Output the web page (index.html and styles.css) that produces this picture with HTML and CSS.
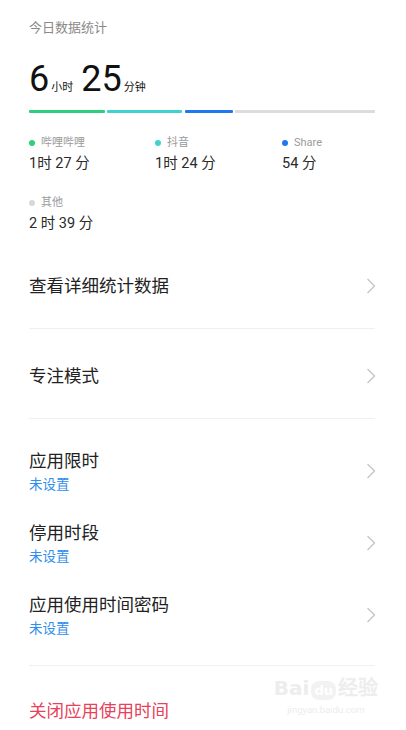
FILE: index.html
```html
<!DOCTYPE html>
<html lang="zh-CN">
<head>
    <meta charset="UTF-8">
    <meta name="viewport" content="width=device-width, initial-scale=1.0">
    <title>屏幕使用时间</title>
    <link rel="stylesheet" href="styles.css">
</head>
<body>
    <div class="page">
        <div class="stats-title">今日数据统计</div>

        <div class="total">
            <span class="num">6</span><span class="unit">小时</span><span class="num">25</span><span class="unit">分钟</span>
        </div>

        <div class="usage-bar">
            <div class="seg seg-bili"></div>
            <div class="seg seg-douyin"></div>
            <div class="seg seg-share"></div>
            <div class="seg seg-other"></div>
        </div>

        <div class="legend">
            <div class="legend-item">
                <div class="legend-label"><span class="dot dot-bili"></span>哔哩哔哩</div>
                <div class="legend-value">1时 27 分</div>
            </div>
            <div class="legend-item">
                <div class="legend-label"><span class="dot dot-douyin"></span>抖音</div>
                <div class="legend-value">1时 24 分</div>
            </div>
            <div class="legend-item">
                <div class="legend-label"><span class="dot dot-share"></span>Share</div>
                <div class="legend-value">54 分</div>
            </div>
            <div class="legend-item">
                <div class="legend-label"><span class="dot dot-other"></span>其他</div>
                <div class="legend-value">2 时 39 分</div>
            </div>
        </div>

        <div class="menu-item single">
            <span class="menu-text">查看详细统计数据</span>
            <svg class="chevron" width="10" height="16" viewBox="0 0 10 16"><path d="M1.5 1 L8.5 8 L1.5 15" fill="none" stroke="#c6c6c6" stroke-width="1.4"/></svg>
        </div>

        <div class="menu-item single">
            <span class="menu-text">专注模式</span>
            <svg class="chevron" width="10" height="16" viewBox="0 0 10 16"><path d="M1.5 1 L8.5 8 L1.5 15" fill="none" stroke="#c6c6c6" stroke-width="1.4"/></svg>
        </div>

        <div class="menu-group">
            <div class="menu-item double">
                <div class="menu-body">
                    <div class="menu-text">应用限时</div>
                    <div class="menu-sub">未设置</div>
                </div>
                <svg class="chevron" width="10" height="16" viewBox="0 0 10 16"><path d="M1.5 1 L8.5 8 L1.5 15" fill="none" stroke="#c6c6c6" stroke-width="1.4"/></svg>
            </div>
            <div class="menu-item double">
                <div class="menu-body">
                    <div class="menu-text">停用时段</div>
                    <div class="menu-sub">未设置</div>
                </div>
                <svg class="chevron" width="10" height="16" viewBox="0 0 10 16"><path d="M1.5 1 L8.5 8 L1.5 15" fill="none" stroke="#c6c6c6" stroke-width="1.4"/></svg>
            </div>
            <div class="menu-item double">
                <div class="menu-body">
                    <div class="menu-text">应用使用时间密码</div>
                    <div class="menu-sub">未设置</div>
                </div>
                <svg class="chevron" width="10" height="16" viewBox="0 0 10 16"><path d="M1.5 1 L8.5 8 L1.5 15" fill="none" stroke="#c6c6c6" stroke-width="1.4"/></svg>
            </div>
        </div>

        <div class="menu-item danger">
            <span class="menu-text">关闭应用使用时间</span>
        </div>

        <div class="watermark">
            <div class="wm-logo">Bai<span class="wm-du">du</span>经验</div>
            <div class="wm-url">jingyan.baidu.com</div>
        </div>
    </div>
</body>
</html>
```

FILE: styles.css
```css
body {
    margin: 0;
    background-color: #ffffff;
    font-family: Roboto, "Noto Sans CJK SC", sans-serif;
    color: #222222;
    overflow: hidden;
}
.page {
    position: relative;
    padding: 20px 31px 0 29px;
}
.stats-title {
    font-size: 13px;
    line-height: 16px;
    color: #8a8a8a;
}
.total {
    margin-top: 23px;
    line-height: 40px;
    height: 40px;
    color: #111111;
}
.total .num {
    font-size: 36px;
}
.total .unit {
    font-size: 11px;
    margin: 0 8px 0 2px;
}
.usage-bar {
    display: flex;
    gap: 2px;
    margin-top: 11px;
    height: 3px;
}
.seg {
    height: 3px;
    border-radius: 1px;
}
.seg-bili { width: 76px; background-color: #2ecf7c; }
.seg-douyin { width: 75px; background-color: #3fd3d0; }
.seg-share { width: 48px; margin-left: 1px; background-color: #1f78f0; }
.seg-other { flex: 1; background-color: #dcdcdc; }

.legend {
    display: grid;
    grid-template-columns: 126px 127px 1fr;
    row-gap: 23px;
    margin-top: 23px;
    margin-bottom: 6px;
}
.legend-label {
    display: flex;
    align-items: center;
    font-size: 11px;
    line-height: 14px;
    color: #9a9a9a;
}
.dot {
    width: 6px;
    height: 6px;
    border-radius: 50%;
    margin-right: 6px;
}
.dot-bili { background-color: #2ecf7c; }
.dot-douyin { background-color: #3fd3d0; }
.dot-share { background-color: #1f78f0; }
.dot-other { background-color: #d8d8d8; }
.legend-value {
    margin-top: 5px;
    font-size: 14.5px;
    line-height: 18px;
    color: #2a2a2a;
}

.menu-item {
    display: flex;
    align-items: center;
    justify-content: space-between;
}
.menu-item.single {
    height: 85px;
    padding-top: 4px;
    border-bottom: 1px solid #f0f0f0;
}
.menu-text {
    font-size: 17.5px;
    line-height: 24px;
    color: #222222;
}
.chevron {
    margin-right: -1px;
}
.menu-group {
    padding: 16px 0 14px;
    border-bottom: 1px solid #f0f0f0;
}
.menu-item.double {
    padding: 14px 0;
}
.menu-sub {
    margin-top: 2px;
    font-size: 13.5px;
    line-height: 18px;
    color: #2f8ded;
}
.menu-item.danger {
    height: 90px;
}
.danger .menu-text {
    color: #e8415a;
}

.watermark {
    position: absolute;
    right: 28px;
    top: 675px;
    text-align: center;
    color: #ededed;
}
.wm-logo {
    font-family: "DejaVu Sans", sans-serif;
    font-size: 20px;
    font-weight: bold;
    line-height: 26px;
}
.wm-du {
    font-size: 13px;
    padding: 2px 3px;
    margin: 0 2px;
    border-radius: 8px;
    background-color: #f2f2f2;
    color: #ffffff;
}
.wm-url {
    font-size: 9.5px;
    line-height: 12px;
}
```
